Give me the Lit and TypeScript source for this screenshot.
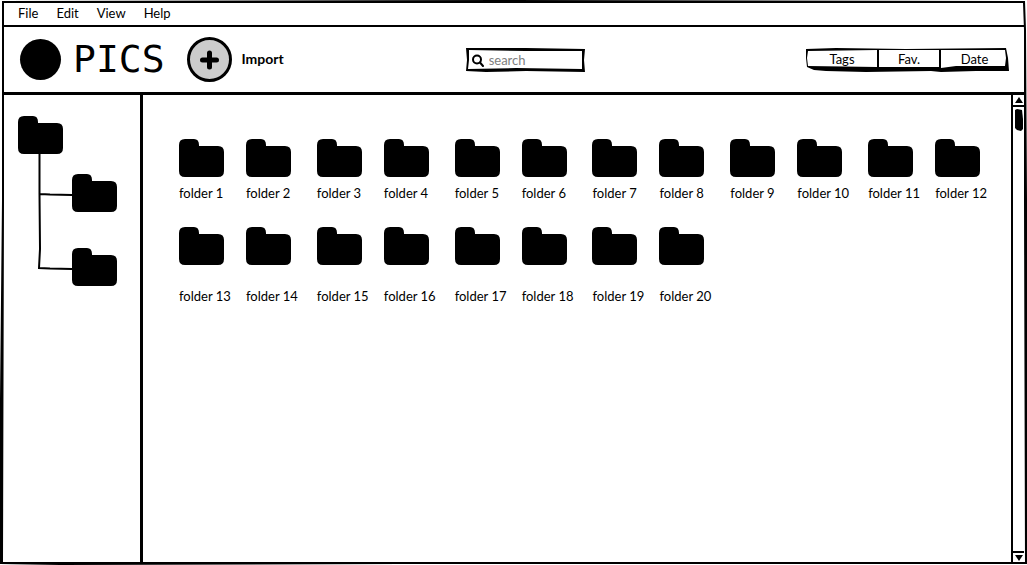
import { LitElement, html, svg, css } from "lit";
import { customElement } from "lit/decorators.js";

const folderShape = svg`<path d="M6 0H15Q20 0 20 6V7H39Q45 7 45 13V32Q45 38 39 38H6Q0 38 0 32V6Q0 0 6 0Z" />`;

@customElement("folder-icon")
export class FolderIcon extends LitElement {
  static styles = css`
    :host { display: block; width: 45px; height: 38px; }
    .shape { display: block; width: 100%; height: 100%; }
  `;
  render() {
    return html`<svg class="shape" viewBox="0 0 45 38" aria-hidden="true">${folderShape}</svg>`;
  }
}

@customElement("app-root")
export class AppRoot extends LitElement {
  static styles = css`
    :host {
      display: block;
      color: #000;
      font-family: Lato, "Open Sans", sans-serif;
      font-size: 13px;
      line-height: 16px;
    }
    * { box-sizing: border-box; }
    button {
      display: block;
      margin: 0;
      padding: 0;
      border: 0;
      background: none;
      color: inherit;
      font: inherit;
      cursor: pointer;
    }
    ul { list-style: none; margin: 0; padding: 0; }
    svg { display: block; }

    .window {
      position: relative;
      display: flex;
      flex-direction: column;
      min-height: 100vh;
      padding: 2px 3px 3px 4px;
      background: #fff;
    }
    .frame {
      position: absolute;
      inset: 0;
      width: 100%;
      height: 100%;
      pointer-events: none;
    }
    .menubar {
      display: flex;
      align-items: center;
      gap: 18px;
      height: 25px;
      padding: 0 14px 2px;
      border-bottom: 2px solid #000;
    }
    .header {
      display: grid;
      grid-template-columns: 20fr 120px 19fr;
      align-items: center;
      height: 68px;
      padding: 0 15px 1px 16px;
      border-bottom: 3px solid #000;
    }
    .brand { display: flex; align-items: center; }
    .logo { width: 41px; height: 41px; border-radius: 50%; background: #000; }
    .title {
      margin: 0 22px 0 12px;
      font-family: "DejaVu Sans Mono", monospace;
      font-size: 38px;
      line-height: 44px;
      font-weight: 400;
    }
    .import {
      display: flex;
      align-items: center;
      gap: 10px;
      font-size: 14px;
      font-weight: 700;
    }
    .search {
      position: relative;
      display: flex;
      align-items: center;
      gap: 5px;
      height: 24px;
      margin-top: 2px;
      padding: 0 6px;
    }
    .outline {
      position: absolute;
      inset: 0;
      width: 100%;
      height: 100%;
      pointer-events: none;
    }
    .query {
      flex: 1;
      min-width: 0;
      padding: 0;
      border: 0;
      outline: 0;
      background: none;
      font: inherit;
      color: #000;
    }
    .query::placeholder { color: #808080; opacity: 1; }
    .filters {
      position: relative;
      justify-self: end;
      display: grid;
      grid-template-columns: 72px 62px 69px;
      height: 24px;
      margin-top: 2px;
      padding-bottom: 3px;
    }
    .filters button { text-align: center; }

    .body {
      flex: 1;
      display: grid;
      grid-template-columns: 139px 1fr 13px;
    }
    .sidebar { padding: 21px 14px; border-right: 3px solid #000; }
    .branch { display: flex; margin-left: 20px; }
    .leaves { display: flex; flex-direction: column; gap: 36px; padding-top: 20px; }

    .content {
      display: flex;
      flex-direction: column;
      gap: 26px;
      padding: 44px 5px 44px 36px;
    }
    .row { display: grid; grid-template-columns: repeat(6, 1fr); }
    .pair { display: grid; grid-template-columns: 67px 67px; }
    .folder { display: grid; justify-items: start; gap: 8px; text-align: left; white-space: nowrap; }
    .loose .folder { gap: 23px; }

    .scrollbar {
      display: flex;
      flex-direction: column;
      align-items: stretch;
      border-left: 2px solid #000;
    }
    .arrow { display: grid; place-items: center; height: 11px; }
    .up { border-bottom: 2px solid #000; height: 12px; }
    .down { border-top: 2px solid #000; }
    .track { flex: 1; padding: 2px; }
  `;

  private folder(n: number) {
    return html`<button class="folder"><folder-icon></folder-icon><span>folder ${n}</span></button>`;
  }

  private row(first: number, last: number, loose = false) {
    const pairs: number[] = [];
    for (let n = first; n <= last; n += 2) pairs.push(n);
    return html`<div class="row ${loose ? "loose" : ""}">
      ${pairs.map((n) => html`<div class="pair">${this.folder(n)}${this.folder(n + 1)}</div>`)}
    </div>`;
  }

  render() {
    return html`
      <div class="window">
        <nav class="menubar" aria-label="Main menu">
          ${["File", "Edit", "View", "Help"].map((m) => html`<button>${m}</button>`)}
        </nav>

        <header class="header">
          <div class="brand">
            <span class="logo"></span>
            <h1 class="title">PICS</h1>
            <button class="import">
              <svg width="45" height="45" viewBox="0 0 45 45" aria-hidden="true">
                <circle cx="22.5" cy="22.5" r="21" fill="#ccc" stroke="#000" stroke-width="3" />
                <path d="M22.5 16V30M15.500 23H29.500" stroke="#000" stroke-width="5" stroke-linecap="round" />
              </svg>
              <span>Import</span>
            </button>
          </div>

          <label class="search">
            <svg class="outline" viewBox="0 0 120 24" preserveAspectRatio="none" aria-hidden="true">
              <path fill-rule="evenodd" d="M0 0L60 0L119 1L118 12L119 24L60 23L20 24L0 23L1 12ZM3 2L3 12L2 21L50 20L116 21L116 12L116 3L60 3Z" />
            </svg>
            <svg width="12" height="13" viewBox="0 0 12 13" fill="none" stroke="#000" stroke-width="2" aria-hidden="true">
              <circle cx="5" cy="5.5" r="4" />
              <path d="M8 8.5L11 12" stroke-linecap="round" />
            </svg>
            <input class="query" type="text" placeholder="search" aria-label="Search" />
          </label>

          <div class="filters">
            <svg class="outline" viewBox="0 0 203 24" preserveAspectRatio="none" aria-hidden="true">
              <path fill-rule="evenodd" d="M0 1L30 0L100 1L200 0L202 10L203 23L170 23L135 24L125 23L60 24L20 23L8 22L1 19L0 10ZM2 3L1 10L2 18L71 19L71 2ZM73 2L73 19L133 19L133 2ZM135 2L135 20L150 18L199 18L200 10L199 2Z" />
            </svg>
            <button>Tags</button><button>Fav.</button><button>Date</button>
          </div>
        </header>

        <div class="body">
          <aside class="sidebar">
            <button aria-label="Root folder"><folder-icon></folder-icon></button>
            <div class="branch">
              <svg width="34" height="118" viewBox="0 0 34 118" fill="none" stroke="#000" stroke-width="2" aria-hidden="true">
                <path d="M1.5 0L1.5 40L2 95L1 114L12 114.6L34 115M2 40L12 40.5L34 41" />
              </svg>
              <ul class="leaves">
                <li><button aria-label="First subfolder"><folder-icon></folder-icon></button></li>
                <li><button aria-label="Second subfolder"><folder-icon></folder-icon></button></li>
              </ul>
            </div>
          </aside>

          <main class="content">
            ${this.row(1, 12)} ${this.row(13, 20, true)}
          </main>

          <div class="scrollbar">
            <button class="arrow up" aria-label="Scroll up">
              <svg width="8" height="6" viewBox="0 0 8 6"><path d="M4 0L8 6H0Z" /></svg>
            </button>
            <div class="track">
              <svg width="8" height="22" viewBox="0 0 8 22" aria-hidden="true">
                <path d="M0 1L2 0L7 1L8 10L8 20L6 22L2 21L0 19Z" />
              </svg>
            </div>
            <button class="arrow down" aria-label="Scroll down">
              <svg width="8" height="6" viewBox="0 0 8 6"><path d="M0 0H8L4 6Z" /></svg>
            </button>
          </div>
        </div>

        <svg class="frame" viewBox="0 0 1027 565" preserveAspectRatio="none" aria-hidden="true">
          <path fill-rule="evenodd" d="M2 1L500 0L1025 1L1026 30L1027 200L1027 564L400 564L60 565L0 564L0 400L2 200ZM4 3L4 200L3 562L500 562L1025 562L1024 200L1024 30L1023 3L500 3Z" />
        </svg>
      </div>
    `;
  }
}
